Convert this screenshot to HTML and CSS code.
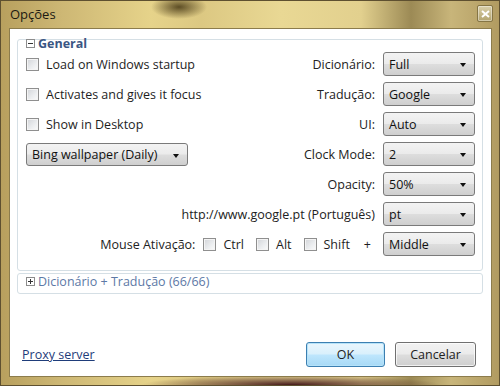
FILE: index.html
```html
<!DOCTYPE html>
<html>
<head>
<meta charset="utf-8">
<link rel="stylesheet" href="styles.css">
</head>
<body>
<div class="window">
  <div class="titlebar">
    <span class="title">Opções</span>
    <span class="close"><svg width="9" height="8" viewBox="0 0 9 8"><path d="M1 1 L8 7 M8 1 L1 7" stroke="#fff" stroke-width="2"/></svg></span>
  </div>
  <div class="client">
    <div class="group">
      <div class="group-head">
        <svg class="toggle" width="9" height="9" viewBox="0 0 9 9"><rect x="0.5" y="0.5" width="8" height="8" fill="#fff" stroke="#8c8c8c"/><path d="M2 4.5 H7" stroke="#333"/></svg>
        <span class="head-text bold">General</span>
      </div>
      <div class="rows">
        <div class="row">
          <label class="check"><span class="cb"></span>Load on Windows startup</label>
          <div class="field"><span class="lbl">Dicionário:</span><span class="select">Full</span></div>
        </div>
        <div class="row">
          <label class="check"><span class="cb"></span>Activates and gives it focus</label>
          <div class="field"><span class="lbl">Tradução:</span><span class="select">Google</span></div>
        </div>
        <div class="row">
          <label class="check"><span class="cb"></span>Show in Desktop</label>
          <div class="field"><span class="lbl">UI:</span><span class="select">Auto</span></div>
        </div>
        <div class="row">
          <span class="select wide">Bing wallpaper (Daily)</span>
          <div class="field"><span class="lbl">Clock Mode:</span><span class="select">2</span></div>
        </div>
        <div class="row end">
          <div class="field"><span class="lbl">Opacity:</span><span class="select">50%</span></div>
        </div>
        <div class="row end">
          <div class="field"><span class="lbl">http://www.google.pt (Português)</span><span class="select">pt</span></div>
        </div>
        <div class="row end">
          <div class="field">
            <span class="lbl">Mouse Ativação:</span>
            <div class="mods">
              <label class="check"><span class="cb"></span>Ctrl</label>
              <label class="check"><span class="cb"></span>Alt</label>
              <label class="check"><span class="cb"></span>Shift</label>
              <span class="plus">+</span>
            </div>
            <span class="select">Middle</span>
          </div>
        </div>
      </div>
    </div>
    <div class="group collapsed">
      <div class="group-head">
        <svg class="toggle" width="9" height="9" viewBox="0 0 9 9"><rect x="0.5" y="0.5" width="8" height="8" fill="#fff" stroke="#8c8c8c"/><path d="M2 4.5 H7 M4.5 2 V7" stroke="#333"/></svg>
        <span class="head-text light">Dicionário + Tradução (66/66)</span>
      </div>
    </div>
    <div class="footer">
      <a class="link" href="#">Proxy server</a>
      <div class="buttons">
        <span class="btn default">OK</span>
        <span class="btn">Cancelar</span>
      </div>
    </div>
  </div>
</div>
</body>
</html>
```

FILE: styles.css
```css
* { box-sizing: border-box; }
html, body { margin: 0; padding: 0; }
body {
  width: 500px;
  height: 386px;
  overflow: hidden;
  font-family: "Open Sans", "Noto Sans", sans-serif;
  font-size: 12.5px;
  color: #1e1e1e;
}
.window {
  width: 500px;
  height: 386px;
  display: flex;
  flex-direction: column;
  padding: 0 7px 8px 8px;
  background:
    radial-gradient(ellipse 28px 12px at 178px 6px, rgba(70,55,20,0.85), rgba(70,55,20,0) 100%),
    radial-gradient(ellipse 150px 10px at 290px 384px, rgba(60,15,20,0.95), rgba(60,15,20,0) 100%),
    linear-gradient(90deg, #b8a05e 0px, #cdb774 60px, #e6d38a 150px, #dcc882 200px, #e9d894 280px, #e2d08e 360px, #9c8a55 410px, #c8b57a 450px, #b09a60 500px);
  border: 1px solid #5e5030;
}
.titlebar {
  height: 27px;
  flex: none;
  display: flex;
  align-items: center;
  justify-content: space-between;
  padding-left: 1px;
}
.title {
  font-size: 13px;
  color: #1c1a12;
  margin-top: -2px;
}
.close {
  width: 16px;
  height: 17px;
  margin-right: -1px;
  margin-top: -2px;
  border: 1px solid #857545;
  border-radius: 2px;
  background: linear-gradient(180deg, #d9cfaa, #b3a46f);
  display: flex;
  align-items: center;
  justify-content: center;
  box-shadow: inset 0 0 0 1px rgba(255,255,255,0.4);
}
.client {
  flex: 1;
  background: #fff;
  border: 1px solid #8c7c4c;
  display: flex;
  flex-direction: column;
  padding: 10px 8px 9px 7px;
}
.group {
  border: 1px solid #d5dfe5;
  border-radius: 3px;
  padding: 0 7px 14px 8px;
}
.group.collapsed {
  margin-top: 2px;
  padding-bottom: 0;
  height: 21px;
}
.group-head {
  height: 11px;
  display: flex;
  align-items: center;
  gap: 3px;
  margin-top: -2px;
}
.group.collapsed .group-head { height: 16px; margin-top: -1px; }
.toggle { flex: none; }
.head-text { line-height: 11px; }
.bold { font-weight: bold; color: #3a5684; }
.light { color: #5d79a6; }
.rows {
  display: flex;
  flex-direction: column;
  gap: 6px;
  margin-top: 3px;
}
.row {
  height: 24px;
  display: flex;
  align-items: center;
  justify-content: space-between;
}
.row.end { justify-content: flex-end; }
.check {
  display: flex;
  align-items: center;
  gap: 7px;
  color: #1e1e1e;
}
.cb {
  width: 13px;
  height: 13px;
  border: 1px solid #8f8f8f;
  background: linear-gradient(135deg, #d2d4d8 0%, #eceef0 60%, #fbfbfb 100%);
  box-shadow: inset 0 0 0 1px #f4f4f4;
  flex: none;
}
.field {
  display: flex;
  align-items: center;
  gap: 8px;
}
.lbl { color: #222; }
.select {
  width: 92px;
  height: 24px;
  border: 1px solid #7a7a7a;
  border-radius: 3px;
  background: linear-gradient(180deg, #f3f3f3 0%, #ebebeb 48%, #dddddd 52%, #cfcfcf 100%);
  display: flex;
  align-items: center;
  padding-left: 5px;
  position: relative;
  color: #111;
}
.select::after {
  content: "";
  position: absolute;
  right: 8px;
  top: 10px;
  border-left: 3.5px solid transparent;
  border-right: 3.5px solid transparent;
  border-top: 4px solid #111;
}
.select.wide {
  width: 162px;
  height: 23px;
}
.mods {
  display: flex;
  align-items: center;
  gap: 12px;
}
.plus { margin-left: 2px; margin-right: 4px; }
.footer {
  margin-top: auto;
  display: flex;
  align-items: center;
  justify-content: space-between;
  padding-left: 5px;
  padding-right: 7px;
}
.link {
  color: #1f3d7a;
  text-decoration: underline;
}
.buttons {
  display: flex;
  gap: 10px;
}
.btn {
  width: 81px;
  height: 25px;
  border: 1px solid #707070;
  border-radius: 3px;
  background: linear-gradient(180deg, #f2f2f2 0%, #ebebeb 48%, #dddddd 52%, #cfcfcf 100%);
  display: flex;
  align-items: center;
  justify-content: center;
  color: #222;
  box-shadow: inset 0 0 0 1px rgba(255,255,255,0.7);
}
.btn.default {
  width: 79px;
  border-color: #3c7fb1;
  background: linear-gradient(180deg, #eaf6fd 0%, #d9f0fc 48%, #bee6fd 52%, #a7d9f5 100%);
  box-shadow: inset 0 0 0 1px #b6e3f9;
}
```
